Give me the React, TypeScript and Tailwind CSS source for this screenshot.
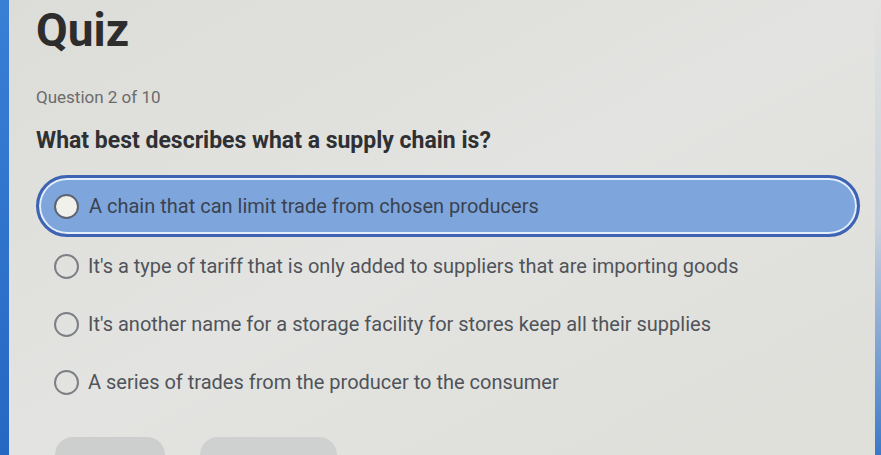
import React from "react";

const options = [
  "A chain that can limit trade from chosen producers",
  "It's a type of tariff that is only added to suppliers that are importing goods",
  "It's another name for a storage facility for stores keep all their supplies",
  "A series of trades from the producer to the consumer",
];

function Radio({ selected }: { selected?: boolean }) {
  return (
    <span
      className={
        "block h-[25px] w-[25px] shrink-0 rounded-full border-2 " +
        (selected ? "border-[#5d6470] bg-[#f1f1ec]" : "border-[#7c7f84] bg-transparent")
      }
    />
  );
}

export default function App() {
  const selectedIndex = 0;
  return (
    <div className="flex h-[455px] w-[881px] overflow-hidden bg-gradient-to-br from-[#dcdcd8] via-[#e3e4e1] to-[#dedfd9] font-['Roboto',sans-serif]">
      <div className="w-[9px] shrink-0 bg-gradient-to-b from-[#3a7fd6] to-[#2468c4]" />
      <main className="flex min-w-0 flex-1 flex-col pl-[27px] pr-[15px]">
        <h1 className="mt-[5px] shrink-0 text-[46px] font-bold leading-[50px] text-[#2d2d2d]">Quiz</h1>
        <p className="mt-[32px] shrink-0 text-[17px] leading-[20px] text-[#6b6b6b]">Question 2 of 10</p>
        <h2 className="mt-[20px] shrink-0 text-[23px] font-bold leading-[28px] text-[#2f3033]">
          What best describes what a supply chain is?
        </h2>
        <ul className="mt-[20px] flex shrink-0 flex-col">
          {options.map((text, i) =>
            i === selectedIndex ? (
              <li
                key={text}
                className="flex h-[62px] items-center gap-[10px] rounded-full border-[3px] border-[#3f63b3] bg-[#7ea6dc] pl-[15px] shadow-[inset_0_0_0_2px_#e4eefa]"
              >
                <Radio selected />
                <span className="text-[20px] text-[#3a4250]">{text}</span>
              </li>
            ) : (
              <li key={text} className="flex h-[58px] items-center gap-[9px] pl-[18px]">
                <Radio />
                <span className="text-[20px] text-[#50535a]">{text}</span>
              </li>
            )
          )}
        </ul>
        <div className="mt-auto flex shrink-0 gap-[35px] pl-[19px]">
          <div className="h-[18px] w-[110px] rounded-t-[18px] bg-[#cdcfcf]" />
          <div className="h-[18px] w-[137px] rounded-t-[18px] bg-[#cfd1d1]" />
        </div>
      </main>
      <div className="w-[6px] shrink-0 bg-gradient-to-b from-transparent via-[#c9d2dc] to-[#3a78c8]" />
    </div>
  );
}
